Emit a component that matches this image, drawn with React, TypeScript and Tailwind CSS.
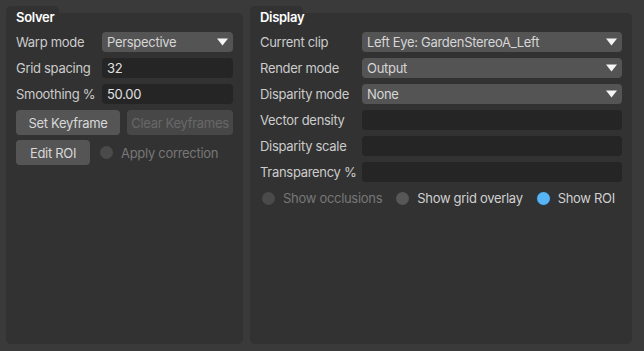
const font = { fontFamily: "Inter, 'Liberation Sans', sans-serif" };

const Caret = () => (
  <svg width="11" height="8" viewBox="0 0 11 8" className="shrink-0">
    <path d="M0 0.5 H11 L5.5 7.5 Z" fill="#f5f5f5" />
  </svg>
);

const Select = ({ value }: { value: string }) => (
  <div className="flex h-[20px] flex-1 items-center justify-between rounded-[4px] bg-[#545454] pl-[5px] pr-[5px] text-[#d6d6d6]">
    <span className="whitespace-nowrap">{value}</span>
    <Caret />
  </div>
);

const Input = ({ value }: { value?: string }) => (
  <div className="flex h-[20px] flex-1 items-center rounded-[4px] bg-[#252525] pl-[5px] text-[#e0e0e0]">
    {value}
  </div>
);

const Row = ({ label, w, children }: { label: string; w: string; children: React.ReactNode }) => (
  <div className="flex items-center">
    <div className={`${w} shrink-0 whitespace-nowrap text-[#cccccc]`}>{label}</div>
    {children}
  </div>
);

const Radio = ({ label, state }: { label: string; state: "off" | "disabled" | "on" }) => (
  <div className="flex shrink-0 items-center gap-[8px] whitespace-nowrap">
    <span
      className={
        state === "on"
          ? "h-[13px] w-[13px] rounded-full bg-[#57b4f5] ring-1 ring-[#2a3a48]"
          : state === "off"
          ? "h-[13px] w-[13px] rounded-full bg-[#575757]"
          : "h-[13px] w-[13px] rounded-full bg-[#4a4a4a]"
      }
    />
    <span className={state === "disabled" ? "text-[#777777]" : "text-[#d0d0d0]"}>{label}</span>
  </div>
);

const Panel = ({ title, className, children }: { title: string; className: string; children: React.ReactNode }) => (
  <div className={`flex flex-col ${className}`}>
    <div className="h-[7px] w-[53px] rounded-t-[5px] bg-[#323232]" />
    <div className="flex-1 rounded-b-[5px] rounded-tr-[5px] bg-[#323232] px-[10px]">
      <div className="-mt-[4px] text-[13px] font-semibold leading-[16px] text-white">{title}</div>
      <div className="mt-[7px] flex flex-col gap-[6px]">{children}</div>
    </div>
  </div>
);

export default function App() {
  return (
    <div
      className="flex h-[351px] w-[644px] gap-[7px] bg-[#3a3a3a] pb-[7px] pl-[6px] pr-[12px] pt-[6px] text-[13px] leading-[16px] tracking-[-0.3px]"
      style={font}
    >
      <Panel title="Solver" className="w-[237px]">
        <Row label="Warp mode" w="w-[86px]">
          <Select value="Perspective" />
        </Row>
        <Row label="Grid spacing" w="w-[86px]">
          <Input value="32" />
        </Row>
        <Row label="Smoothing %" w="w-[86px]">
          <Input value="50.00" />
        </Row>
        <div className="flex gap-[7px]">
          <div className="flex h-[25px] w-[104px] items-center justify-center rounded-[4px] bg-[#555555] text-[#d8d8d8]">
            Set Keyframe
          </div>
          <div className="flex h-[25px] flex-1 items-center justify-center whitespace-nowrap rounded-[4px] bg-[#474747] text-[#686868]">
            Clear Keyframes
          </div>
        </div>
        <div className="-mt-[1px] flex items-center gap-[10px]">
          <div className="flex h-[25px] w-[74px] items-center justify-center rounded-[4px] bg-[#555555] text-[#d8d8d8]">
            Edit ROI
          </div>
          <Radio label="Apply correction" state="disabled" />
        </div>
      </Panel>
      <Panel title="Display" className="flex-1">
        <Row label="Current clip" w="w-[102px]">
          <Select value="Left Eye: GardenStereoA_Left" />
        </Row>
        <Row label="Render mode" w="w-[102px]">
          <Select value="Output" />
        </Row>
        <Row label="Disparity mode" w="w-[102px]">
          <Select value="None" />
        </Row>
        <Row label="Vector density" w="w-[102px]">
          <Input />
        </Row>
        <Row label="Disparity scale" w="w-[102px]">
          <Input />
        </Row>
        <Row label="Transparency %" w="w-[102px]">
          <Input />
        </Row>
        <div className="mt-[2px] flex items-center gap-[14px] pl-[2px]">
          <Radio label="Show occlusions" state="disabled" />
          <Radio label="Show grid overlay" state="off" />
          <Radio label="Show ROI" state="on" />
        </div>
      </Panel>
    </div>
  );
}
